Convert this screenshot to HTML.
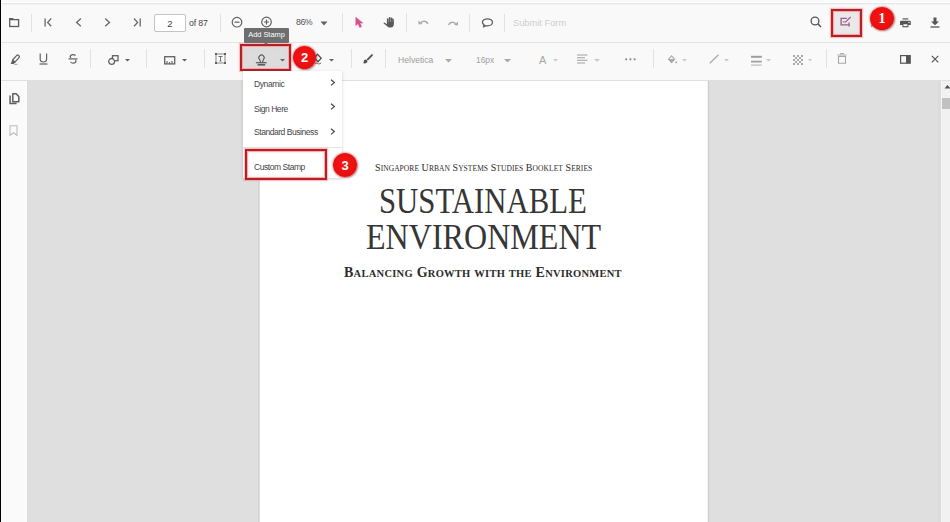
<!DOCTYPE html>
<html><head><meta charset="utf-8">
<style>
*{box-sizing:border-box;margin:0;padding:0}
html,body{width:950px;height:522px;overflow:hidden;background:#dfdfdf;font-family:"Liberation Sans",sans-serif;position:relative}
.a{position:absolute}
.sep{position:absolute;width:1px;background:#e2e2e2}
svg{position:absolute;overflow:visible}
.t{position:absolute;white-space:nowrap;line-height:1}
.ser{font-family:"Liberation Serif",serif;color:#2b2b2b}
</style></head><body>
<!-- top strip -->
<div class="a" style="left:0;top:0;width:950px;height:2px;background:#fbfbfb"></div>
<div class="a" style="left:0;top:2px;width:950px;height:1px;background:#ffffff"></div>
<div class="a" style="left:0;top:3px;width:950px;height:1px;background:#e8e8e8"></div>
<!-- toolbar 1 -->
<div class="a" style="left:0;top:4px;width:950px;height:38px;background:#f9f9f9;border-top:1px solid #f3f3f3"></div>
<div class="a" style="left:0;top:42px;width:950px;height:1px;background:#e3e3e3"></div>
<!-- toolbar 2 -->
<div class="a" style="left:0;top:43px;width:950px;height:37px;background:#f9f9f9"></div>
<div class="a" style="left:0;top:80px;width:950px;height:1px;background:#e0e0e0"></div>
<!-- left panel -->
<div class="a" style="left:0;top:81px;width:27px;height:441px;background:#fafafa;border-right:1px solid #fff"></div><div class="a" style="left:27px;top:81px;width:1px;height:441px;background:#d9d9d9"></div>
<!-- page -->
<div class="a" style="left:258px;top:81px;width:451px;height:441px;background:#fff;border-left:1px solid #d4d4d4;border-right:1px solid #cdcdcd"></div><div class="a" style="left:259px;top:81px;width:1px;height:441px;background:#dddddd"></div><div class="a" style="left:707px;top:81px;width:1px;height:441px;background:#f6f6f6"></div>
<!-- scrollbar -->
<div class="a" style="left:938px;top:81px;width:3px;height:441px;background:#dbdbdb"></div><div class="a" style="left:941px;top:81px;width:9px;height:441px;background:#f1f1f1;border-left:1px solid #f6f6f6"></div>
<div class="a" style="left:942px;top:98px;width:8px;height:11px;background:#c1c1c1"></div>
<svg style="left:941px;top:81px" width="9" height="10"><path d="M3.5 7.5 L6.5 4 L9.5 7.5Z" fill="#505050"/></svg>
<!-- black left edge -->
<div class="a" style="left:0;top:0;width:1px;height:522px;background:#000"></div>

<!-- ===== Toolbar 1 icons ===== -->
<!-- folder -->
<svg style="left:9px;top:17px" width="12" height="11"><path d="M0 1h4l0.8 1.2H0z" fill="#5c5c5c"/><rect x="0.7" y="2.6" width="8.9" height="6.9" fill="none" stroke="#5c5c5c" stroke-width="1.3"/></svg>
<div class="sep" style="left:31px;top:14px;height:18px"></div>
<!-- first page -->
<svg style="left:44px;top:18px" width="9" height="9"><path d="M1.1 0.4v8" stroke="#686868" stroke-width="1.3"/><path d="M7.2 0.5L3.6 4.4 7.2 8.3" fill="none" stroke="#686868" stroke-width="1.3"/></svg>
<!-- prev -->
<svg style="left:75px;top:18px" width="7" height="9"><path d="M5.9 0.5L1.6 4.4 5.9 8.3" fill="none" stroke="#686868" stroke-width="1.3"/></svg>
<!-- next -->
<svg style="left:104px;top:18px" width="7" height="9"><path d="M1.2 0.5L5.5 4.4 1.2 8.3" fill="none" stroke="#686868" stroke-width="1.3"/></svg>
<!-- last -->
<svg style="left:133px;top:18px" width="9" height="9"><path d="M7.2 0.4v8" stroke="#686868" stroke-width="1.3"/><path d="M1 0.5L4.6 4.4 1 8.3" fill="none" stroke="#686868" stroke-width="1.3"/></svg>
<!-- page input -->
<div class="a" style="left:154px;top:14px;width:32px;height:18px;border:1px solid #c4c4c4;border-radius:2px;background:#fff"></div>
<div class="t" style="left:154px;top:19px;width:32px;text-align:center;font-size:9.5px;color:#444">2</div>
<div class="t" style="left:189px;top:19px;font-size:8.8px;letter-spacing:-0.15px;color:#444">of 87</div>
<div class="sep" style="left:220px;top:14px;height:18px"></div>
<!-- zoom out -->
<svg style="left:231px;top:16px" width="12" height="12"><circle cx="6" cy="6.2" r="4.8" fill="none" stroke="#616161" stroke-width="1.2"/><path d="M3.5 6.2h5" stroke="#616161" stroke-width="1.2"/></svg>
<!-- zoom in -->
<svg style="left:260px;top:16px" width="12" height="12"><circle cx="6.5" cy="6" r="4.8" fill="none" stroke="#616161" stroke-width="1.2"/><path d="M4 6h5M6.5 3.5v5" stroke="#616161" stroke-width="1.2"/></svg>
<div class="t" style="left:296px;top:18px;font-size:8.8px;letter-spacing:-0.5px;color:#555">86%</div>
<svg style="left:320px;top:21px" width="8" height="5"><path d="M0.5 0.5h7L4 4.5z" fill="#616161"/></svg>
<div class="sep" style="left:342px;top:13px;height:19px"></div>
<!-- select arrow pink -->
<svg style="left:355px;top:17px" width="9" height="11"><path d="M0.8 0.2L0.8 8.6 3 6.8 4.7 10.4 6.6 9.6 4.9 6.1 7.9 6.1Z" fill="#d9508a" stroke="#d9508a" stroke-width="0.5" stroke-linejoin="round"/></svg>
<!-- pan hand -->
<svg style="left:383px;top:17px" width="11" height="11"><rect x="3.9" y="1.2" width="1.7" height="6" rx=".85" fill="#5a5a5a"/><rect x="5.8" y="0" width="1.7" height="7" rx=".85" fill="#5a5a5a"/><rect x="7.7" y="0.4" width="1.7" height="6.6" rx=".85" fill="#5a5a5a"/><rect x="9.2" y="1.8" width="1.6" height="5.5" rx=".8" fill="#5a5a5a"/><path d="M3.9 5h6.9v2.3c0 2.2-1.3 3.2-3.1 3.2h-1c-1 0-1.6-.4-2.2-1.1L0.7 6.4c-.4-.5.2-1.1.8-.8L3.9 7.3z" fill="#5a5a5a"/></svg>
<div class="sep" style="left:406px;top:13px;height:19px"></div>
<!-- undo -->
<svg style="left:418px;top:19px" width="11" height="7"><path d="M2.8 3.8C4.8 1.6 8 1.6 10 4.8" fill="none" stroke="#ababab" stroke-width="1.5"/><path d="M0.4 1.4L0.6 5.6 4.6 5z" fill="#ababab"/></svg>
<!-- redo -->
<svg style="left:447px;top:19.5px" width="12" height="7"><path d="M8.7 3.8C6.7 1.6 3.5 1.6 1.5 4.8" fill="none" stroke="#ababab" stroke-width="1.5"/><path d="M11.1 1.4L10.9 5.6 6.9 5z" fill="#ababab"/></svg>
<div class="sep" style="left:469px;top:14px;height:18px"></div>
<!-- comment -->
<svg style="left:481px;top:18px" width="13" height="10"><path d="M6.5 0.8C3.7 0.8 1.4 2.4 1.4 4.3c0 1.1.7 2 1.7 2.6L2.4 8.9 5 7.6c.5.1 1 .2 1.5.2 2.8 0 5-1.6 5-3.5S9.3 0.8 6.5 0.8z" fill="none" stroke="#616161" stroke-width="1.3" stroke-linejoin="round"/></svg>
<div class="sep" style="left:504px;top:14px;height:18px"></div>
<div class="t" style="left:513px;top:19px;font-size:9.3px;color:#cfcfcf">Submit Form</div>
<!-- search -->
<svg style="left:810px;top:16px" width="12" height="12"><circle cx="5" cy="5" r="3.9" fill="none" stroke="#555" stroke-width="1.3"/><path d="M7.8 7.8l3.2 3.2" stroke="#555" stroke-width="1.5"/></svg>
<!-- annotation edit (red box 1) -->
<div class="a" style="left:831px;top:9px;width:31px;height:28px;background:#e9e9e9;border:2px solid #b0222a;box-shadow:0 0 1px 1px rgba(255,140,140,.55), inset 0 0 0 1px rgba(245,150,150,.75), inset 0 0 2px 2px rgba(255,200,200,.35)"></div>
<svg style="left:840px;top:16px" width="12" height="12"><path d="M6.8 2.4H1.1V8.9H9.4" fill="none" stroke="#a3578c" stroke-width="1.3"/><path d="M9 6.6v4" stroke="#a3578c" stroke-width="1.3"/><path d="M2.8 5.9H4.8" stroke="#a3578c" stroke-width="1.1"/><path d="M5.2 6.4L10.6 1" stroke="#a3578c" stroke-width="1.2"/></svg>
<!-- print -->
<svg style="left:899.5px;top:17.5px" width="12" height="10"><rect x="2.6" y="0.3" width="5.6" height="1.2" fill="#555"/><path d="M1 2.7h8.8a1 1 0 0 1 1 1v3.3H8.4V9.3H2.4V7H0V3.7a1 1 0 0 1 1-1z" fill="#555"/><rect x="3.4" y="6.3" width="4" height="1.8" fill="#fff"/><circle cx="9" cy="4.4" r="0.7" fill="#fff"/></svg>
<!-- download -->
<svg style="left:930px;top:17px" width="10" height="11"><path d="M3.5 0.5h3v4h2.5L5 8.3 1 4.5h2.5z" fill="#555"/><path d="M0.5 10h9" stroke="#555" stroke-width="1.3"/></svg>

<!-- ===== Toolbar 2 icons ===== -->
<!-- highlight -->
<svg style="left:9.5px;top:53.5px" width="10" height="11"><path d="M2.6 6L6.8 1.3a1 1 0 0 1 1.4-.1l.9.8a1 1 0 0 1 .1 1.4L5 8.2z" fill="none" stroke="#616161" stroke-width="1.2" stroke-linejoin="round"/><path d="M2.4 5.6L5.4 8.3 3.8 9.9 0.7 10.1z" fill="#616161"/><path d="M4 10.4h3.5" stroke="#9a9a9a" stroke-width="0.8"/></svg>
<!-- underline -->
<svg style="left:39px;top:53px" width="9" height="12"><path d="M1.2 0.5v5.5c0 2 1.3 3 3.2 3s3.2-1 3.2-3V0.5" fill="none" stroke="#616161" stroke-width="1.2"/><path d="M0.5 11h8" stroke="#616161" stroke-width="1.2"/></svg>
<!-- strike -->
<svg style="left:68px;top:54px" width="10" height="10"><path d="M7.5 1.5C6.8.8 6 .6 5 .6 3.3.6 2.2 1.5 2.2 2.6c0 .6.3 1.1.8 1.4M2.5 8c.6.8 1.5 1.2 2.6 1.2 1.7 0 2.8-.9 2.8-2.1 0-.5-.2-.9-.5-1.2" fill="none" stroke="#616161" stroke-width="1.2"/><path d="M0.5 4.9h9" stroke="#616161" stroke-width="1.2"/></svg>
<div class="sep" style="left:90px;top:49px;height:19px"></div>
<!-- shapes -->
<svg style="left:108px;top:55px" width="11" height="10"><rect x="4.5" y="0.7" width="5.5" height="5" fill="none" stroke="#616161" stroke-width="1.3"/><circle cx="3.6" cy="6.4" r="2.9" fill="#f8f8f8" stroke="#616161" stroke-width="1.3"/></svg>
<svg style="left:125px;top:59px" width="5" height="3"><path d="M0 0h5L2.5 2.5z" fill="#616161"/></svg>
<div class="sep" style="left:146px;top:49px;height:19px"></div>
<!-- calibrate -->
<svg style="left:164px;top:56px" width="12" height="9"><rect x="0.7" y="0.7" width="10" height="7.2" fill="none" stroke="#616161" stroke-width="1.3"/><path d="M3 7.5v-2.6M5.5 7.5v-1.6M8 7.5v-2.6" stroke="#616161" stroke-width="1.1"/></svg>
<svg style="left:182px;top:59px" width="5" height="3"><path d="M0 0h5L2.5 2.5z" fill="#616161"/></svg>
<div class="sep" style="left:204px;top:49px;height:19px"></div>
<!-- free text -->
<svg style="left:215px;top:53px" width="11" height="11"><rect x="1" y="1" width="9" height="9" fill="none" stroke="#7a7a7a" stroke-width="0.9"/><rect x="0" y="0" width="2" height="2" fill="#616161"/><rect x="9" y="0" width="2" height="2" fill="#616161"/><rect x="0" y="9" width="2" height="2" fill="#616161"/><rect x="9" y="9" width="2" height="2" fill="#616161"/><path d="M3.5 3.5h4M5.5 3.5v4.5M4.5 8h2" stroke="#616161" stroke-width="0.9"/></svg>

<!-- stamp button with red box 2 -->
<div class="a" style="left:240px;top:44px;width:51px;height:27px;background:#dcdcdc;border:2px solid #b0222a;box-shadow:0 0 1px 1px rgba(255,140,140,.55), inset 0 0 0 1px rgba(245,150,150,.75), inset 0 0 2px 2px rgba(255,200,200,.35)"></div>
<svg style="left:255px;top:54px" width="12" height="12"><path d="M5.6 8.2L4.6 5.6A2.65 2.65 0 1 1 8.4 5.6L7.4 8.2" fill="none" stroke="#5a5a5a" stroke-width="1.1"/><rect x="0.9" y="8.1" width="10.7" height="1.2" fill="#5a5a5a"/><rect x="2.6" y="9.9" width="7.6" height="1.7" fill="#5a5a5a"/></svg>
<svg style="left:280px;top:59px" width="5" height="3"><path d="M0 0h5L2.5 2.5z" fill="#616161"/></svg>

<!-- signature (partly hidden) -->
<svg style="left:312px;top:53px" width="12" height="13"><path d="M5.5 1.2L9.2 5.2 6 8.8 2.5 5z" fill="none" stroke="#555" stroke-width="1.3"/><path d="M3 10.8c1-.8 2-.9 2.8-.2s1.6.3 3.2-.6" fill="none" stroke="#666" stroke-width="1"/></svg>
<svg style="left:329px;top:59px" width="5" height="3"><path d="M0 0h5L2.5 2.5z" fill="#616161"/></svg>
<div class="sep" style="left:351px;top:49px;height:19px"></div>
<!-- ink brush -->
<svg style="left:362px;top:53px" width="12" height="12"><path d="M10 2.1L5.8 6.3" stroke="#555" stroke-width="1.9" stroke-linecap="round"/><path d="M3.6 6.6c1 0 1.9.8 1.8 1.9-.1 1.2-1.3 1.9-2.6 1.9-.7 0-1.3-.1-1.8-.4.6-.4.7-.9.8-1.6.1-1 .8-1.8 1.8-1.8z" fill="#555"/></svg>
<div class="sep" style="left:385px;top:49px;height:19px"></div>
<div class="t" style="left:398px;top:56px;font-size:8.6px;color:#9e9e9e">Helvetica</div>
<svg style="left:445px;top:59px" width="7" height="4"><path d="M0 0h7L3.5 3.5z" fill="#a8a8a8"/></svg>
<div class="t" style="left:476px;top:56px;font-size:8.4px;color:#a0a0a0">16px</div>
<svg style="left:504px;top:59px" width="7" height="4"><path d="M0 0h7L3.5 3.5z" fill="#a8a8a8"/></svg>
<div class="t" style="left:539px;top:54.5px;font-size:11px;color:#a8a8a8">A</div>
<svg style="left:553px;top:59px" width="5" height="3"><path d="M0 0h5L2.5 2.5z" fill="#c8c8c8"/></svg>
<!-- align -->
<svg style="left:577px;top:54px" width="11" height="10"><path d="M0 1h10.5M0 3.7h8M0 6.3h10.5M0 9h8" stroke="#a0a0a0" stroke-width="1.1"/></svg>
<svg style="left:594px;top:59px" width="6" height="3"><path d="M0 0h6L3 2.8z" fill="#c8c8c8"/></svg>
<!-- dots -->
<svg style="left:625px;top:58px" width="11" height="3"><circle cx="1.2" cy="1.3" r="1.1" fill="#8a8a8a"/><circle cx="5.4" cy="1.3" r="1.1" fill="#8a8a8a"/><circle cx="9.6" cy="1.3" r="1.1" fill="#8a8a8a"/></svg>
<div class="sep" style="left:653px;top:49px;height:19px"></div>
<!-- fill -->
<svg style="left:668px;top:55px" width="10" height="9"><path d="M3.6 0.8L0.6 4.2 3.6 7.6 6.6 4.2z" fill="none" stroke="#a8a8a8" stroke-width="1.1"/><path d="M0.6 4.2L3.6 7.6 6.6 4.2c-1-.6-2-.2-3-.1-1 .1-2-.1-3 .1z" fill="#a8a8a8"/><circle cx="8.2" cy="7.3" r="0.9" fill="#a0a0a0"/></svg>
<svg style="left:682px;top:59px" width="5" height="3"><path d="M0 0h5L2.5 2.5z" fill="#c8c8c8"/></svg>
<!-- stroke line -->
<svg style="left:709px;top:54px" width="11" height="10"><path d="M0.8 9.2L9.5 0.8" stroke="#a8a8a8" stroke-width="1.2"/></svg>
<svg style="left:724px;top:59px" width="5" height="3"><path d="M0 0h5L2.5 2.5z" fill="#c8c8c8"/></svg>
<!-- thickness -->
<svg style="left:751px;top:55px" width="11" height="11"><rect x="0" y="0.8" width="10.8" height="2" fill="#9e9e9e"/><rect x="0" y="5.7" width="10.8" height="1.8" fill="#a2a2a2"/><rect x="0" y="9.6" width="10.8" height="1" fill="#b0b0b0"/></svg>
<svg style="left:766px;top:59px" width="5" height="3"><path d="M0 0h5L2.5 2.5z" fill="#c8c8c8"/></svg>
<!-- opacity checker -->
<svg style="left:793px;top:55px" width="10" height="10"><defs><pattern id="ck" width="4" height="4" patternUnits="userSpaceOnUse"><rect width="2" height="2" fill="#a8a8a8"/><rect x="2" y="2" width="2" height="2" fill="#a8a8a8"/></pattern></defs><rect width="10" height="10" fill="url(#ck)"/></svg>
<svg style="left:808px;top:59px" width="4" height="3"><path d="M0 0h4L2 2.5z" fill="#c8c8c8"/></svg>
<div class="sep" style="left:826px;top:49px;height:19px"></div>
<!-- trash -->
<svg style="left:837px;top:53px" width="10" height="11"><path d="M0.5 2h9M3.5 1.5v-1h3v1" fill="none" stroke="#a8a8a8" stroke-width="1"/><path d="M1.5 3.5h7V10.3h-7z" fill="none" stroke="#a8a8a8" stroke-width="1.1"/></svg>
<!-- panel toggle -->
<svg style="left:900px;top:55px" width="11" height="9"><rect x="0.6" y="0.6" width="9.6" height="7.6" fill="none" stroke="#555" stroke-width="1.2"/><rect x="6" y="0.6" width="4.2" height="7.6" fill="#555"/></svg>
<!-- close -->
<svg style="left:931px;top:55px" width="8" height="8"><path d="M0.8 0.8l6.5 6.5M7.3 0.8L0.8 7.3" stroke="#555" stroke-width="1.2"/></svg>

<!-- tooltip -->
<div class="a" style="left:244px;top:28px;width:45px;height:14.5px;background:#6e6e6e;border-radius:1px"></div>
<svg style="left:262px;top:41px" width="8" height="5"><path d="M0 0h8L4 4z" fill="#6f6f6f"/></svg>
<div class="t" style="left:244px;top:31px;width:45px;text-align:center;font-size:7.4px;color:#fff">Add Stamp</div>

<!-- ===== left panel icons ===== -->
<svg style="left:9px;top:93px" width="11" height="12"><path d="M3.8 0.8h3.4l2.6 2.7v5.3H3.8z" fill="#fdf8fa" stroke="#5e5e5e" stroke-width="1.5" stroke-linejoin="round"/><path d="M1.1 2.6v7.9H7.6" fill="none" stroke="#5e5e5e" stroke-width="1.5"/></svg>
<svg style="left:9px;top:125px" width="9" height="11"><path d="M1 0.7h7v9.6L4.5 7.7 1 10.3z" fill="none" stroke="#bdbdbd" stroke-width="1.1"/></svg>

<!-- ===== page text ===== -->
<div id="ser" class="t ser" style="left:375px;top:163px;font-size:10px;letter-spacing:0.06px">S<span style="font-size:7.5px">INGAPORE</span> U<span style="font-size:7.5px">RBAN</span> S<span style="font-size:7.5px">YSTEMS</span> S<span style="font-size:7.5px">TUDIES</span> B<span style="font-size:7.5px">OOKLET</span> S<span style="font-size:7.5px">ERIES</span></div>
<div id="sus" class="t ser" style="color:#363636;left:379px;top:184px;font-size:35px;transform-origin:0 0;transform:scaleX(0.879)">SUSTAINABLE</div>
<div id="env" class="t ser" style="color:#363636;left:366px;top:220px;font-size:35px;transform-origin:0 0;transform:scaleX(0.9165)">ENVIRONMENT</div>
<div id="bal" class="t ser" style="left:344px;top:266px;font-size:14px;font-weight:bold;letter-spacing:0.26px">B<span style="font-size:10.5px">ALANCING</span> G<span style="font-size:10.5px">ROWTH</span> <span style="font-size:10.5px">WITH</span> <span style="font-size:10.5px">THE</span> E<span style="font-size:10.5px">NVIRONMENT</span></div>

<!-- ===== stamp menu ===== -->
<div class="a" style="left:243px;top:71px;width:99px;height:107px;background:#fff;box-shadow:0 1px 3px rgba(0,0,0,.18)"></div>
<div class="t" style="left:254px;top:80px;font-size:8.5px;color:#454545;letter-spacing:-0.4px">Dynamic</div>
<div class="t" style="left:254px;top:104.5px;font-size:8.5px;color:#454545;letter-spacing:-0.44px">Sign Here</div>
<div class="t" style="left:254px;top:128px;font-size:8.5px;color:#454545;letter-spacing:-0.45px">Standard Business</div>
<svg style="left:330px;top:79px" width="6" height="7"><path d="M1 0.8l3.3 2.8-3.3 2.8" fill="none" stroke="#444" stroke-width="1.2"/></svg>
<svg style="left:330px;top:103px" width="6" height="7"><path d="M1 0.8l3.3 2.8-3.3 2.8" fill="none" stroke="#444" stroke-width="1.2"/></svg>
<svg style="left:330px;top:128px" width="6" height="7"><path d="M1 0.8l3.3 2.8-3.3 2.8" fill="none" stroke="#444" stroke-width="1.2"/></svg>
<div class="a" style="left:243px;top:147px;width:99px;height:1px;background:#e4e4e4"></div>
<div class="a" style="left:245px;top:149px;width:82px;height:31px;border:2px solid #b0222a;box-shadow:0 0 1px 1px rgba(255,140,140,.55), inset 0 0 0 1px rgba(245,150,150,.75), inset 0 0 2px 2px rgba(255,200,200,.35)"></div>
<div class="t" style="left:254px;top:163px;font-size:8.5px;color:#454545;letter-spacing:-0.45px">Custom Stamp</div>

<!-- ===== badges ===== -->
<svg style="left:870px;top:22px" width="6" height="7"><path d="M1.5 0.5L1 5.5 4.5 3z" fill="rgba(130,30,30,.55)"/></svg>
<div class="a" style="left:870px;top:7px;width:24px;height:23px;border-radius:50%;background:radial-gradient(circle at 48% 45%,#f51515,#ea1010 60%,#cc0d0d 90%,#b00a0a);box-shadow:0 0 1.5px 1px rgba(200,40,40,.35), 1px 1px 2px rgba(60,0,0,.35)"></div>
<div class="t ser" style="left:870px;top:12px;width:24px;text-align:center;font-size:14px;font-weight:bold;color:#fff">1</div>
<div class="a" style="left:293px;top:46px;width:23px;height:23px;border-radius:50%;background:radial-gradient(circle at 48% 45%,#f51515,#ea1010 60%,#cc0d0d 90%,#b00a0a);box-shadow:0 0 1.5px 1px rgba(200,40,40,.35), 1px 1px 2px rgba(60,0,0,.35)"></div>
<div class="t" style="left:293px;top:51px;width:23px;text-align:center;font-size:13px;font-weight:bold;color:#fff">2</div>
<div class="a" style="left:333px;top:153px;width:24px;height:24px;border-radius:50%;background:radial-gradient(circle at 48% 45%,#f51515,#ea1010 60%,#cc0d0d 90%,#b00a0a);box-shadow:0 0 1.5px 1px rgba(200,40,40,.35), 1px 1px 2px rgba(60,0,0,.35)"></div>
<div class="t" style="left:333px;top:159px;width:24px;text-align:center;font-size:13px;font-weight:bold;color:#fff">3</div>
</body></html>
